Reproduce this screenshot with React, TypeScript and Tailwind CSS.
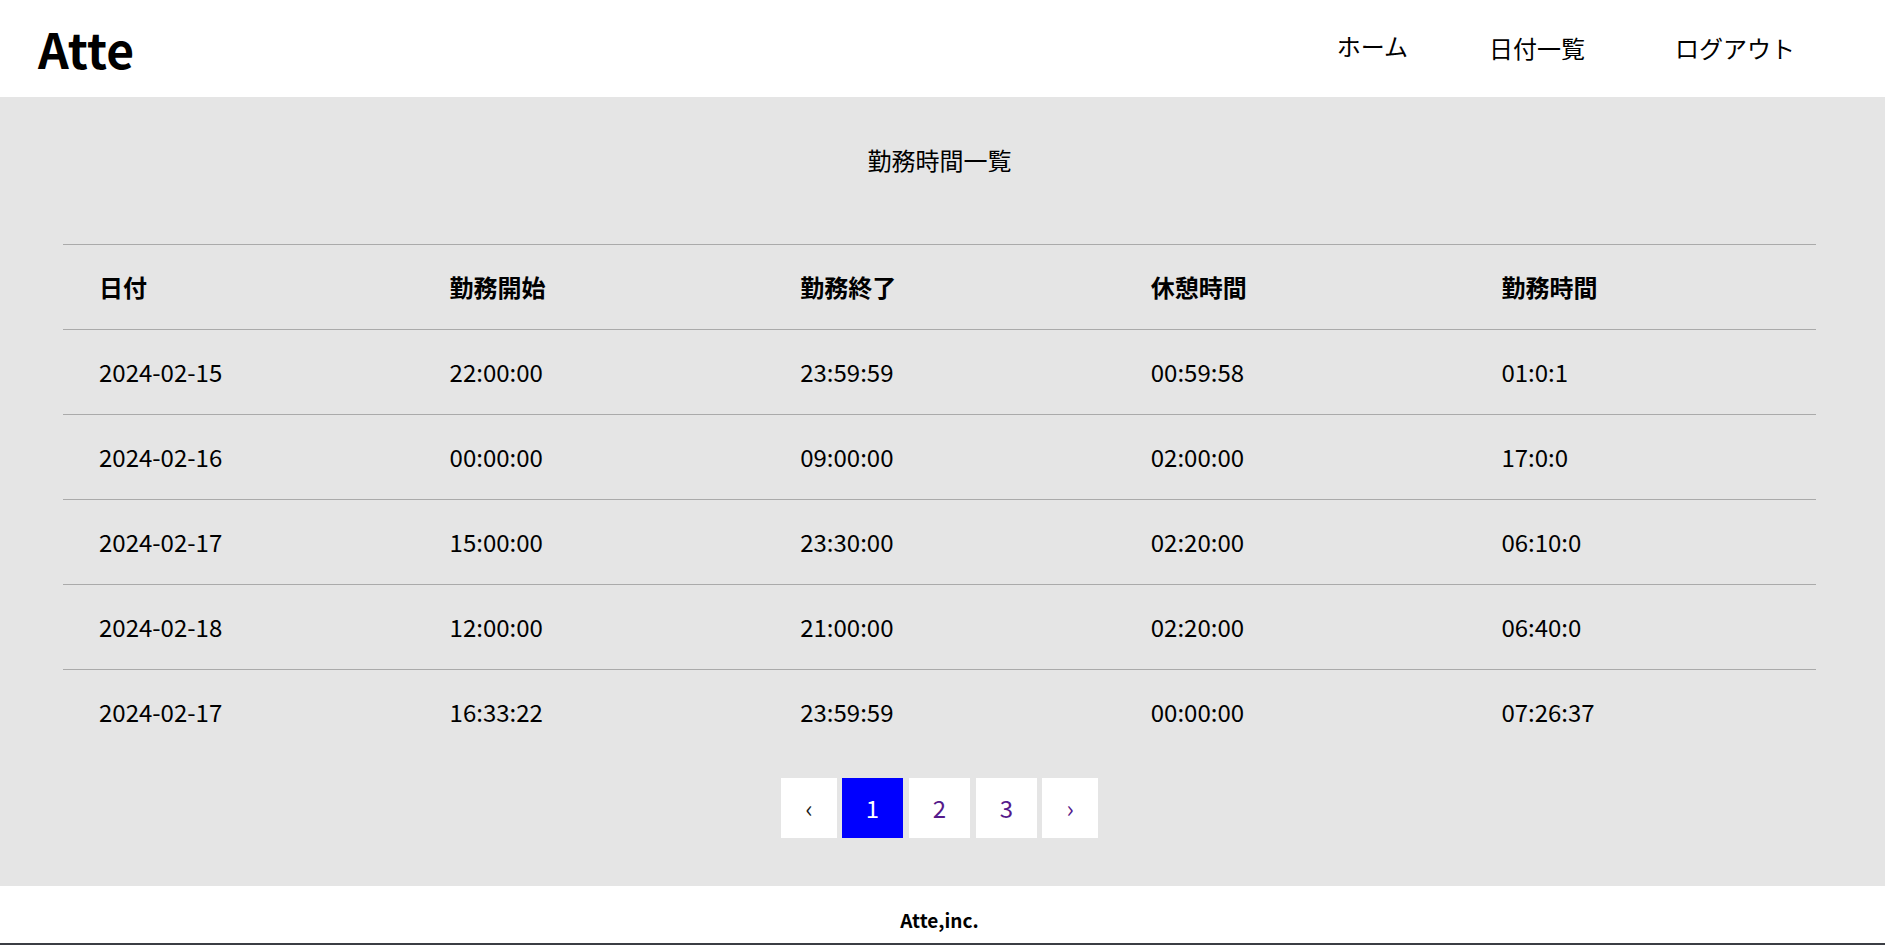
import React from "react";

const rows = [
  ["2024-02-15", "22:00:00", "23:59:59", "00:59:58", "01:0:1"],
  ["2024-02-16", "00:00:00", "09:00:00", "02:00:00", "17:0:0"],
  ["2024-02-17", "15:00:00", "23:30:00", "02:20:00", "06:10:0"],
  ["2024-02-18", "12:00:00", "21:00:00", "02:20:00", "06:40:0"],
  ["2024-02-17", "16:33:22", "23:59:59", "00:00:00", "07:26:37"],
];

const heads = ["日付", "勤務開始", "勤務終了", "休憩時間", "勤務時間"];

export default function App() {
  return (
    <div
      className="w-[1885px] h-[945px] overflow-hidden flex flex-col bg-white text-black"
      style={{ fontFamily: '"Noto Sans CJK JP", "Noto Sans", sans-serif' }}
    >
      <header className="h-[97px] flex items-center bg-white shrink-0">
        <h1 className="ml-[38px] text-[48px] font-bold leading-none tracking-[0px] -mt-[2px]">Atte</h1>
        <nav className="ml-auto flex items-center text-[24px] leading-none mr-[90px] -mt-[2px]">
          <a className="mr-[81px] -mt-[3px]">ホーム</a>
          <a className="mr-[90px]">日付一覧</a>
          <a>ログアウト</a>
        </nav>
      </header>

      <main className="bg-[#e5e5e5] h-[789px] shrink-0 pt-[45px]">
        <div className="ml-[63px] w-[1753px] flex flex-col">
          <h2 className="text-center text-[24px] leading-[36px] font-normal">勤務時間一覧</h2>
          <div className="mt-[66px]">
            <div className="grid grid-cols-5 h-[85px] border-t border-[#aaaaaa] items-center">
              {heads.map((h) => (
                <div key={h} className="pl-[36px] text-[24px] font-bold leading-none">
                  {h}
                </div>
              ))}
            </div>
            {rows.map((r, i) => (
              <div key={i} className="grid grid-cols-5 h-[85px] border-t border-[#aaaaaa] items-center">
                {r.map((c, j) => (
                  <div key={j} className="pl-[36px] text-[24px] leading-none">
                    {c}
                  </div>
                ))}
              </div>
            ))}
          </div>
          <div className="mt-[24px] flex justify-center">
            <span className="w-[56px] h-[60px] bg-white flex items-center justify-center text-[24px] text-[#1a1a1a]">‹</span>
            <span className="ml-[5px] w-[61px] h-[60px] bg-[#0000ff] flex items-center justify-center text-[24px] text-white">1</span>
            <a className="ml-[6px] w-[61px] h-[60px] bg-white flex items-center justify-center text-[24px] text-[#551a8b]">2</a>
            <a className="ml-[6px] w-[61px] h-[60px] bg-white flex items-center justify-center text-[24px] text-[#551a8b]">3</a>
            <a className="ml-[5px] w-[56px] h-[60px] bg-white flex items-center justify-center text-[24px] text-[#551a8b]">›</a>
          </div>
        </div>
      </main>

      <footer className="h-[57px] shrink-0 bg-white flex items-center">
        <div className="ml-[63px] w-[1753px] text-center text-[19px] font-bold leading-none pt-[9px]">Atte,inc.</div>
      </footer>
      <div className="h-[2px] bg-[#3b3e44] shrink-0" />
    </div>
  );
}
